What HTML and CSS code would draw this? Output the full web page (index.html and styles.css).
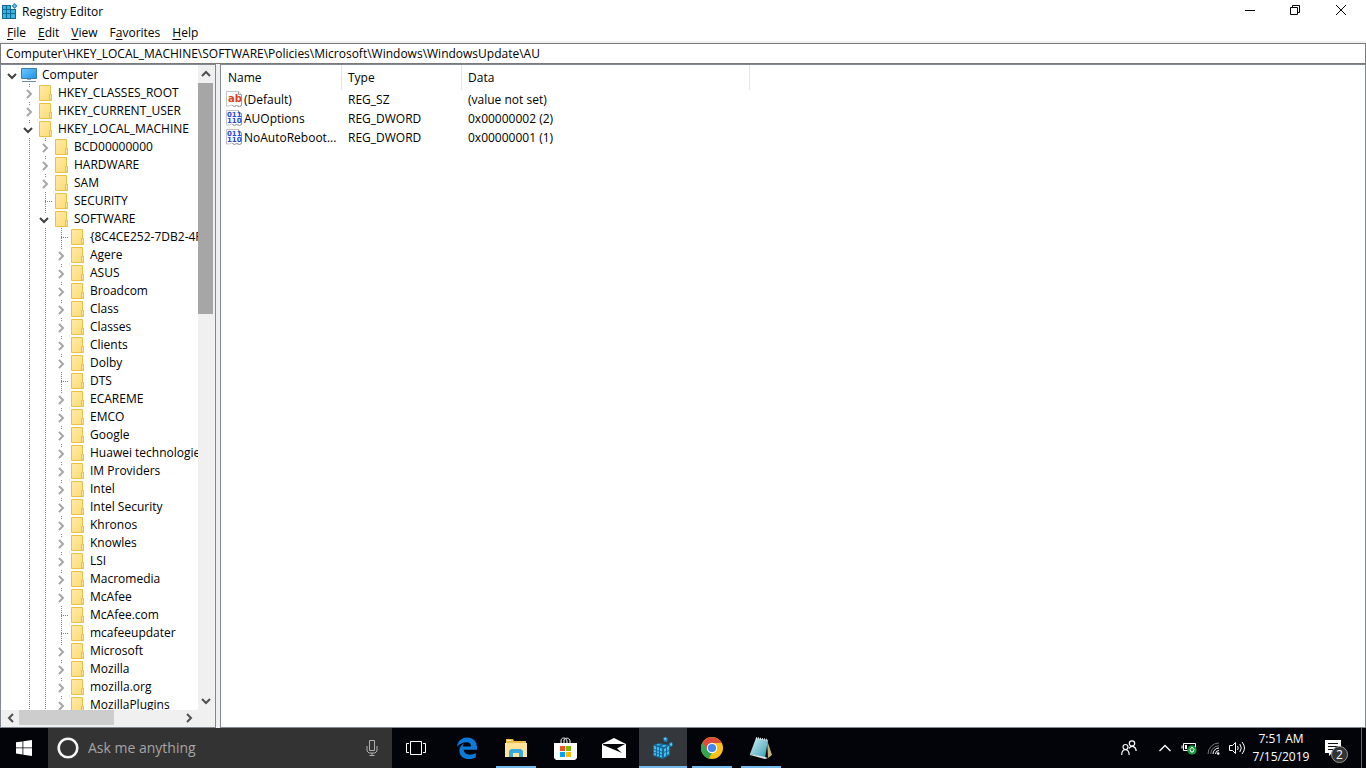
FILE: index.html
```html
<!DOCTYPE html>
<html lang="en">
<head>
<meta charset="utf-8">
<title>Registry Editor</title>
<link rel="stylesheet" href="styles.css">
</head>
<body>
<svg class="sprite" aria-hidden="true">
  <defs>
    <linearGradient id="folder-fill" x1="0" y1="0" x2="1" y2="1"><stop offset="0" stop-color="#ffeaa8"/><stop offset="1" stop-color="#fddc74"/></linearGradient>
    <linearGradient id="screen-fill" x1="0" y1="0" x2="1" y2="1"><stop offset="0" stop-color="#6fc8ff"/><stop offset="1" stop-color="#1b93ea"/></linearGradient>
    <linearGradient id="note-fill" x1="0" y1="0" x2="1" y2="1"><stop offset="0" stop-color="#d8f1f5"/><stop offset="1" stop-color="#2f9db3"/></linearGradient>
  </defs>
  <symbol id="folder" viewBox="0 0 13 16"><path d="M.5.5h11v9h1v6H.5z" fill="url(#folder-fill)" stroke="#e8c145"/><path d="M10.5 15v-5.500h2V15z" fill="#ffe597" stroke="#e8c145"/></symbol>
  <symbol id="open" viewBox="0 0 10 10"><path d="M1 3l4 4 4-4" fill="none" stroke="#404040" stroke-width="2"/></symbol>
  <symbol id="closed" viewBox="0 0 10 10"><path d="M4 1l4 4-4 4" fill="none" stroke="#a6a6a6" stroke-width="2"/></symbol>
  <symbol id="page" viewBox="0 0 16 16"><path d="M.5.5h12l3 3v11l-2 1-3-1-2 1-3-1.500-2 1H.5z" fill="#fff" stroke="#c4c4c4"/><path d="M12.500.5v3h3" fill="#eee" stroke="#a0a0a0"/><path d="M15.500 4v10.500l-2 1-3-1-2 1-2-1" fill="none" stroke="#9a9a9a"/></symbol>
  <symbol id="right" viewBox="0 0 10 10"><path d="M3 1l4 4-4 4" fill="none" stroke="#505050" stroke-width="2"/></symbol>
</svg>

<main class="window">
  <header class="titlebar">
    <svg class="app-icon" viewBox="0 0 16 16"><path d="M0 2h14v14H0z" fill="#12688f"/><path d="M1 3h3v3H1zM5 3h3v3H5zM1 7h3v3H1zM5 7h3v3H5zM9 7h4v3H9zM1 11h3v4H1zM5 11h3v4H5zM9 11h4v4H9z" fill="#35b4e9"/><path d="M9 0h7v6H9z" fill="#fff"/><path d="M12.500 0l3 3-3 3-3-3z" fill="#2889b8"/><path d="M12.500 1.500L14 3l-1.500 1.500L11 3z" fill="#69c8ee"/></svg>
    <h1>Registry Editor</h1>
    <div class="controls">
      <button aria-label="Minimize"><svg viewBox="0 0 10 10"><path d="M1 5.500h10"/></svg></button>
      <button aria-label="Restore"><svg viewBox="0 0 10 10"><path d="M.5 2.500h7v7h-7zM2.500 2V.5h7v7H8"/></svg></button>
      <button aria-label="Close"><svg viewBox="0 0 10 10"><path d="M0 0l10 10M10 0L0 10"/></svg></button>
    </div>
  </header>
  <nav class="menu">
    <button><u>F</u>ile</button><button><u>E</u>dit</button><button><u>V</u>iew</button><button>F<u>a</u>vorites</button><button><u>H</u>elp</button>
  </nav>
  <input class="address" aria-label="Address" value="Computer\HKEY_LOCAL_MACHINE\SOFTWARE\Policies\Microsoft\Windows\WindowsUpdate\AU">
  <div class="panes">
    <section class="tree-pane">
      <div class="tree-main">
        <ul class="tree">
          <li><button class="tog" aria-label="Collapse"><svg><use href="#open"/></svg></button><svg class="computer" viewBox="0 0 17 16"><path d="M.5 1.500h15v10H.5z" fill="url(#screen-fill)" stroke="#3d7ba8"/><path d="M6 12h4v1H6z" fill="#9ab"/><path d="M1 14.500h14" stroke="#6d8ba0"/></svg>Computer</li>
          <li><i></i><button class="tog" aria-label="Expand"><svg><use href="#closed"/></svg></button><svg class="folder"><use href="#folder"/></svg>HKEY_CLASSES_ROOT</li>
          <li><i></i><button class="tog" aria-label="Expand"><svg><use href="#closed"/></svg></button><svg class="folder"><use href="#folder"/></svg>HKEY_CURRENT_USER</li>
          <li><i></i><button class="tog" aria-label="Collapse"><svg><use href="#open"/></svg></button><svg class="folder"><use href="#folder"/></svg>HKEY_LOCAL_MACHINE</li>
          <li><i></i><i class="line"></i><button class="tog" aria-label="Expand"><svg><use href="#closed"/></svg></button><svg class="folder"><use href="#folder"/></svg>BCD00000000</li>
          <li><i></i><i class="line"></i><button class="tog" aria-label="Expand"><svg><use href="#closed"/></svg></button><svg class="folder"><use href="#folder"/></svg>HARDWARE</li>
          <li><i></i><i class="line"></i><button class="tog" aria-label="Expand"><svg><use href="#closed"/></svg></button><svg class="folder"><use href="#folder"/></svg>SAM</li>
          <li><i></i><i class="line"></i><i class="line leaf"></i><svg class="folder"><use href="#folder"/></svg>SECURITY</li>
          <li><i></i><i class="line"></i><button class="tog" aria-label="Collapse"><svg><use href="#open"/></svg></button><svg class="folder"><use href="#folder"/></svg>SOFTWARE</li>
          <li><i></i><i class="line"></i><i class="line"></i><i class="line leaf"></i><svg class="folder"><use href="#folder"/></svg>{8C4CE252-7DB2-4F8</li>
          <li><i></i><i class="line"></i><i class="line"></i><button class="tog" aria-label="Expand"><svg><use href="#closed"/></svg></button><svg class="folder"><use href="#folder"/></svg>Agere</li>
          <li><i></i><i class="line"></i><i class="line"></i><button class="tog" aria-label="Expand"><svg><use href="#closed"/></svg></button><svg class="folder"><use href="#folder"/></svg>ASUS</li>
          <li><i></i><i class="line"></i><i class="line"></i><button class="tog" aria-label="Expand"><svg><use href="#closed"/></svg></button><svg class="folder"><use href="#folder"/></svg>Broadcom</li>
          <li><i></i><i class="line"></i><i class="line"></i><button class="tog" aria-label="Expand"><svg><use href="#closed"/></svg></button><svg class="folder"><use href="#folder"/></svg>Class</li>
          <li><i></i><i class="line"></i><i class="line"></i><button class="tog" aria-label="Expand"><svg><use href="#closed"/></svg></button><svg class="folder"><use href="#folder"/></svg>Classes</li>
          <li><i></i><i class="line"></i><i class="line"></i><button class="tog" aria-label="Expand"><svg><use href="#closed"/></svg></button><svg class="folder"><use href="#folder"/></svg>Clients</li>
          <li><i></i><i class="line"></i><i class="line"></i><button class="tog" aria-label="Expand"><svg><use href="#closed"/></svg></button><svg class="folder"><use href="#folder"/></svg>Dolby</li>
          <li><i></i><i class="line"></i><i class="line"></i><i class="line leaf"></i><svg class="folder"><use href="#folder"/></svg>DTS</li>
          <li><i></i><i class="line"></i><i class="line"></i><button class="tog" aria-label="Expand"><svg><use href="#closed"/></svg></button><svg class="folder"><use href="#folder"/></svg>ECAREME</li>
          <li><i></i><i class="line"></i><i class="line"></i><button class="tog" aria-label="Expand"><svg><use href="#closed"/></svg></button><svg class="folder"><use href="#folder"/></svg>EMCO</li>
          <li><i></i><i class="line"></i><i class="line"></i><button class="tog" aria-label="Expand"><svg><use href="#closed"/></svg></button><svg class="folder"><use href="#folder"/></svg>Google</li>
          <li><i></i><i class="line"></i><i class="line"></i><button class="tog" aria-label="Expand"><svg><use href="#closed"/></svg></button><svg class="folder"><use href="#folder"/></svg>Huawei technologies</li>
          <li><i></i><i class="line"></i><i class="line"></i><button class="tog" aria-label="Expand"><svg><use href="#closed"/></svg></button><svg class="folder"><use href="#folder"/></svg>IM Providers</li>
          <li><i></i><i class="line"></i><i class="line"></i><button class="tog" aria-label="Expand"><svg><use href="#closed"/></svg></button><svg class="folder"><use href="#folder"/></svg>Intel</li>
          <li><i></i><i class="line"></i><i class="line"></i><button class="tog" aria-label="Expand"><svg><use href="#closed"/></svg></button><svg class="folder"><use href="#folder"/></svg>Intel Security</li>
          <li><i></i><i class="line"></i><i class="line"></i><button class="tog" aria-label="Expand"><svg><use href="#closed"/></svg></button><svg class="folder"><use href="#folder"/></svg>Khronos</li>
          <li><i></i><i class="line"></i><i class="line"></i><button class="tog" aria-label="Expand"><svg><use href="#closed"/></svg></button><svg class="folder"><use href="#folder"/></svg>Knowles</li>
          <li><i></i><i class="line"></i><i class="line"></i><button class="tog" aria-label="Expand"><svg><use href="#closed"/></svg></button><svg class="folder"><use href="#folder"/></svg>LSI</li>
          <li><i></i><i class="line"></i><i class="line"></i><button class="tog" aria-label="Expand"><svg><use href="#closed"/></svg></button><svg class="folder"><use href="#folder"/></svg>Macromedia</li>
          <li><i></i><i class="line"></i><i class="line"></i><button class="tog" aria-label="Expand"><svg><use href="#closed"/></svg></button><svg class="folder"><use href="#folder"/></svg>McAfee</li>
          <li><i></i><i class="line"></i><i class="line"></i><i class="line leaf"></i><svg class="folder"><use href="#folder"/></svg>McAfee.com</li>
          <li><i></i><i class="line"></i><i class="line"></i><i class="line leaf"></i><svg class="folder"><use href="#folder"/></svg>mcafeeupdater</li>
          <li><i></i><i class="line"></i><i class="line"></i><button class="tog" aria-label="Expand"><svg><use href="#closed"/></svg></button><svg class="folder"><use href="#folder"/></svg>Microsoft</li>
          <li><i></i><i class="line"></i><i class="line"></i><button class="tog" aria-label="Expand"><svg><use href="#closed"/></svg></button><svg class="folder"><use href="#folder"/></svg>Mozilla</li>
          <li><i></i><i class="line"></i><i class="line"></i><button class="tog" aria-label="Expand"><svg><use href="#closed"/></svg></button><svg class="folder"><use href="#folder"/></svg>mozilla.org</li>
          <li><i></i><i class="line"></i><i class="line"></i><button class="tog" aria-label="Expand"><svg><use href="#closed"/></svg></button><svg class="folder"><use href="#folder"/></svg>MozillaPlugins</li>
        </ul>
        <div class="vbar">
          <button aria-label="Scroll up"><svg class="up"><use href="#right"/></svg></button>
          <div class="track"><div class="thumb"></div></div>
          <button aria-label="Scroll down"><svg class="down"><use href="#right"/></svg></button>
        </div>
      </div>
      <div class="hbar">
        <button aria-label="Scroll left"><svg class="left"><use href="#right"/></svg></button>
        <div class="track"><div class="thumb"></div></div>
        <button aria-label="Scroll right"><svg><use href="#right"/></svg></button>
      </div>
    </section>
    <section class="list-pane">
      <table>
        <colgroup><col class="c-name"><col class="c-type"><col class="c-data"></colgroup>
        <thead><tr><th>Name</th><th>Type</th><th>Data</th></tr></thead>
        <tbody>
          <tr><td><div class="entry"><svg viewBox="0 0 16 16"><use href="#page"/><text class="ab" x="2" y="11">ab</text></svg><span>(Default)</span></div></td><td>REG_SZ</td><td>(value not set)</td></tr>
          <tr><td><div class="entry"><svg viewBox="0 0 16 16"><use href="#page"/><text class="bits" x="1" y="7">011</text><text class="bits" x="1" y="13">110</text></svg><span>AUOptions</span></div></td><td>REG_DWORD</td><td>0x00000002 (2)</td></tr>
          <tr><td><div class="entry"><svg viewBox="0 0 16 16"><use href="#page"/><text class="bits" x="1" y="7">011</text><text class="bits" x="1" y="13">110</text></svg><span>NoAutoReboot...</span></div></td><td>REG_DWORD</td><td>0x00000001 (1)</td></tr>
        </tbody>
      </table>
    </section>
  </div>
</main>

<footer class="taskbar">
  <button class="start" aria-label="Start"><svg width="16" height="16" viewBox="0 0 16 16"><path d="M0 2.300l6.500-.9v6.100H0zM7.300 1.300L16 0v7.500H7.300zM0 8.300h6.500v6.200L0 13.600zM7.300 8.300H16V16l-8.700-1.300z" fill="#fff"/></svg></button>
  <div class="search">
    <svg width="22" height="22" viewBox="0 0 22 22"><circle cx="11" cy="11" r="9.300" fill="none" stroke="#f4f4f4" stroke-width="2.600"/></svg>
    <input aria-label="Search" placeholder="Ask me anything">
    <button aria-label="Voice search"><svg width="12" height="16" viewBox="0 0 12 16" fill="none" stroke="#b0b0b0"><path d="M3.500.5h5v10h-5zM1 6v5l2 2h6l2-2V6M6 13v2.500M3.500 15.500h5"/></svg></button>
  </div>
  <button class="app view" aria-label="Task View"><svg width="20" height="14" viewBox="0 0 20 14" fill="none" stroke="#fff"><path d="M4.500.5h11v13h-11zM3 2.500H.5v9H3M17 2.500h2.500v9H17"/></svg></button>
  <div class="apps">
    <button class="app" aria-label="Edge"><svg width="20" height="22" viewBox="0 0 20 22"><path d="M0 9.500C.8 4 4.500.5 10 .5c6.500 0 10 4.300 10 10v2.300H6.700c.2 3.200 3 4.900 6.400 4.900 2.200 0 4-.6 5.700-1.600v4.400C17 21.400 15 22 12 22 6 22 2.400 18.500 2.400 13.700c0-3.300 1.800-6 5-7.700-1 1-1.500 2.200-1.700 3.600H14c0-2.700-1.300-4.400-4.500-4.400C5.800 5.200 2.600 6.800 0 9.500z" fill="#0b7ad8"/></svg></button>
    <button class="app running" aria-label="File Explorer"><svg width="22" height="20" viewBox="0 0 22 20"><path d="M1 1h7l1 2h12v16H1z" fill="#efbd45"/><path d="M2 2h4v1H2z" fill="#fff2bd"/><path d="M0 5h22v14H0z" fill="#ffe49a"/><path d="M4 19v-6l2-2h10l2 2v6h-4v-4H8v4z" fill="#3aa9dc"/></svg></button>
    <button class="app" aria-label="Store"><svg width="23" height="23" viewBox="0 0 23 23"><path d="M7 7V4c0-4 5-4 6 0v3M10 6V3c1-3 6-2 6 1v3" fill="none" stroke="#fff"/><path d="M0 6h23v15l-2 2H2l-2-2z" fill="#fff"/><path d="M6 9h5v5H6z" fill="#f25022"/><path d="M12 9h5v5h-5z" fill="#7fba00"/><path d="M6 15h5v5H6z" fill="#00a4ef"/><path d="M12 15h5v5h-5z" fill="#ffb900"/></svg></button>
    <button class="app" aria-label="Mail"><svg width="24" height="20" viewBox="0 0 24 20"><path d="M0 6L12 0l12 6v14H0z" fill="#fff"/><path d="M1 6h22l-8 4.500 5 4.500L1 7z" fill="#05060a"/></svg></button>
    <button class="app active" aria-label="Registry Editor"><svg width="20" height="22" viewBox="0 0 20 22"><path d="M0 8l6-2 11 2v10l-7 4-10-3z" fill="#126b9b"/><path d="M1 9l2 .5v3L1 12zM4 10l2 .5v3L4 13zM7 11l2 .5v3L7 14zM1 13l2 .5v2L1 15zM4 14l2 .5v2L4 16zM7 15l2 .5v2L7 17zM1 16l2 .5v2L1 18zM4 17l2 .5v2L4 19zM7 18l2 .5v2L7 20zM11 12l2-1v3l-2 1zM14 10l2-1v4l-2 1zM11 16l2-1v4l-2 1zM14 15l2-1v3l-2 1zM3 8l2-1 3 .5-2 1zM8 9l3-1 3 .5-3 1.500z" fill="#48bdeb"/><path d="M10 1l3-1 2 2-1 3-3-.5zM16 6l3-1 1 3-2 2-2-1z" fill="#1988bb"/><path d="M11 1l2-.5.500 2-2 .5zM17 7l2-1v2l-1 1z" fill="#69d0f1"/></svg></button>
    <button class="app running" aria-label="Chrome"><svg width="22" height="22" viewBox="0 0 22 22"><circle cx="11" cy="11" r="11" fill="#fbc116"/><path d="M1.500 5.500A11 11 0 0 1 20.600 6H11l-5 7.500z" fill="#de4a3b"/><path d="M1.500 5.500L6.700 14 11 16l-3.200 5.600A11 11 0 0 1 1.500 5.500z" fill="#31a553"/><circle cx="11" cy="11" r="5.200" fill="#fff"/><circle cx="11" cy="11" r="4.100" fill="#4486ef"/></svg></button>
    <button class="app running" aria-label="Notepad"><svg width="22" height="22" viewBox="0 0 22 22"><path d="M17 3l5 15-4 3z" fill="#c6b47a"/><path d="M6 1l12 2-3 18-15-4z" fill="url(#note-fill)"/><path d="M0 17l15 3 3 1-3 1-15-4z" fill="#e1e4df"/><path d="M6 1l12 2" stroke="#dce6e6" stroke-width="2" stroke-dasharray="1 1"/></svg></button>
  </div>
  <div class="tray">
    <button class="people" aria-label="People"><svg width="16" height="16" viewBox="0 0 16 16" fill="none" stroke="#fff" stroke-width="1.200"><circle cx="11" cy="3.500" r="2.700"/><circle cx="4.500" cy="7" r="2.500"/><path d="M.7 15c0-7 7.300-7 7.500 0M8 8.500c2-3.500 7-2.500 7.200 2.500"/></svg></button>
    <button aria-label="Show hidden icons"><svg width="12" height="8" viewBox="0 0 12 8" fill="none" stroke="#fff" stroke-width="1.300"><path d="M.5 7L6 1.500 11.500 7"/></svg></button>
    <button aria-label="Battery"><svg width="16" height="14" viewBox="0 0 16 14"><path d="M2.500 2.500h12v7h-12zM1 4.500v3" fill="none" stroke="#fff"/><path d="M4 4h2v4H4z" fill="#fff"/><circle cx="11" cy="9" r="4.700" fill="#18953c"/><path d="M11 6l2 2.500-1 2.500h-2L9 8.500z" fill="none" stroke="#fff"/></svg></button>
    <button aria-label="Network"><svg width="13" height="13" viewBox="0 0 13 13" fill="none"><path d="M1 12A11 11 0 0 1 12 1M3.700 12A8.300 8.300 0 0 1 12 3.800" stroke="#777"/><path d="M6 12a6 6 0 0 1 6-6M8.500 12A3.500 3.500 0 0 1 12 8.500" stroke="#fff"/><circle cx="11.200" cy="11.500" r="1.300" fill="#fff"/></svg></button>
    <button aria-label="Volume"><svg width="17" height="14" viewBox="0 0 17 14" fill="none" stroke="#fff"><path d="M.5 4.500h3l3-3v11l-3-3h-3zM8.500 5q1.500 2 0 4M10.800 3q3 4 0 8M13 1q5 6 0 12"/></svg></button>
    <button class="clock"><span>7:51 AM</span><span>7/15/2019</span></button>
    <button class="notify" aria-label="Notifications"><svg width="16" height="16" viewBox="0 0 16 16"><path d="M0 0h16v13H7l-3 3v-3H0z" fill="#fff"/><path d="M3 3.500h10M3 6.500h10M3 9.500h6" stroke="#111"/></svg><span class="badge">2</span></button>
    <button class="desktop" aria-label="Show desktop"></button>
  </div>
</footer>
</body>
</html>
```
FILE: styles.css
```css
* { box-sizing: border-box; }
html, body { height: 100%; }
body {
  margin: 0;
  display: flex;
  flex-direction: column;
  overflow: hidden;
  background: #fff;
  color: #000;
  font: 12px/18px "Segoe UI", "Open Sans", "Noto Sans", sans-serif;
}
button, input {
  margin: 0;
  padding: 0;
  border: 0;
  background: none;
  color: inherit;
  font: inherit;
}
svg { display: block; flex: none; }
.sprite { position: absolute; width: 0; height: 0; }
.window { flex: 1; min-height: 0; display: flex; flex-direction: column; }

.titlebar { display: flex; align-items: flex-start; height: 24px; padding: 3px 2px 0; }
.app-icon { width: 16px; height: 16px; }
.titlebar h1 { flex: 1; margin: 0 0 0 4px; font-size: 12px; font-weight: 400; }
.controls { display: flex; }
.controls button { width: 46px; height: 16px; display: flex; justify-content: center; padding-top: 2px; }
.controls svg { width: 10px; height: 10px; fill: none; stroke: #000; overflow: visible; }

.menu { display: flex; height: 19px; padding-left: 1px; border-bottom: 2px solid #f0f0f0; }
.menu button { padding: 0 6px; line-height: 17px; }
.menu u { text-underline-offset: 2px; }
.address { width: 100%; height: 21px; border: 1px solid #7a7a7a; padding: 0 5px; }

.panes { flex: 1; min-height: 0; display: flex; gap: 4px; background: #f0f0f0; }
.tree-pane { width: 216px; flex: none; display: flex; flex-direction: column; border: 1px solid #828790; background: #f0f0f0; }
.tree-main { flex: 1; min-height: 0; display: flex; }
.tree { flex: 1; min-width: 0; margin: 0; padding: 1px 0 0 3px; list-style: none; overflow: hidden; background: #fff; }
.tree li { display: flex; height: 18px; white-space: nowrap; }
.tree i, .tog { width: 16px; height: 18px; flex: none; }
.line, .tog {
  background: repeating-linear-gradient(#808080 0 1px, transparent 1px 2px) 9px 0 / 1px 18px no-repeat;
}
.leaf {
  background:
    repeating-linear-gradient(#808080 0 1px, transparent 1px 2px) 9px 0 / 1px 18px no-repeat,
    repeating-linear-gradient(90deg, #808080 0 1px, transparent 1px 2px) 9px 9px / 7px 1px no-repeat;
}
.tog { display: flex; align-items: center; justify-content: center; padding-top: 2px; background-size: 1px 3px; }
.tree li:first-child .tog { background: none; }
.tog svg { width: 10px; height: 10px; }
.folder { width: 13px; height: 16px; margin: 1px 6px 0 3px; }
.computer { width: 17px; height: 16px; margin: 1px 4px 0 1px; }

.vbar { width: 17px; flex: none; display: flex; flex-direction: column; padding-right: 2px; }
.vbar button { height: 18px; display: flex; align-items: center; justify-content: center; }
.vbar svg, .hbar svg { width: 10px; height: 10px; }
.up { transform: rotate(-90deg); }
.down { transform: rotate(90deg); }
.left { transform: rotate(180deg); }
.track { flex: 1; }
.vbar .thumb { height: 38%; background: #a6a6a6; }
.hbar { height: 17px; display: flex; align-items: stretch; padding: 0 18px 0 1px; }
.hbar button { width: 17px; height: 15px; display: flex; align-items: center; justify-content: center; }
.hbar .thumb { width: 59%; height: 15px; background: #cdcdcd; }

.list-pane { flex: 1; min-width: 0; border: 1px solid #828790; background: #fff; }
table { width: 529px; table-layout: fixed; border-collapse: separate; border-spacing: 0; }
.c-name { width: 121px; }
.c-type { width: 120px; }
.c-data { width: 288px; }
th { height: 25px; padding: 0 6px; border-right: 1px solid #e5e5e5; font-weight: 400; text-align: left; }
th:first-child { padding-left: 7px; }
td { height: 19px; padding: 0 6px; white-space: nowrap; }
td:first-child { padding: 0 0 0 5px; }
.entry { display: flex; gap: 2px; }
.entry svg { width: 16px; height: 16px; }
.ab { font: 700 10px "DejaVu Sans", sans-serif; fill: #d9421e; }
.bits { font: 700 7px "DejaVu Sans", sans-serif; fill: #2a4bd8; }

.taskbar { height: 40px; flex: none; display: flex; background: #020409; color: #fff; }
.taskbar button { display: flex; align-items: center; justify-content: center; }
.start { width: 48px; }
.search { width: 344px; display: flex; align-items: center; gap: 9px; padding: 0 14px 0 9px; background: #333; }
.search input { flex: 1; min-width: 0; font-size: 14px; outline: 0; }
.search input::placeholder { color: #a5a5a5; opacity: 1; }
.app { width: 48px; }
.apps { flex: 1; display: flex; gap: 1px; margin-left: 3px; }
.running { background: linear-gradient(#76b9ed, #76b9ed) 4px 38px / 40px 2px no-repeat; }
.taskbar .active { padding-top: 2px; background: #34373c; border-bottom: 2px solid #76b9ed; }
.tray { display: flex; }
.tray button { width: 24px; }
.tray .people { width: 48px; }
.tray .clock { width: 64px; flex-direction: column; }
.tray .notify { width: 48px; position: relative; padding-right: 8px; }
.badge {
  position: absolute;
  left: 18px;
  top: 18px;
  width: 17px;
  height: 17px;
  border: 1px solid #999;
  border-radius: 50%;
  background: #333;
  line-height: 15px;
}
.tray .desktop { width: 5px; border-left: 1px solid #666; }
```
